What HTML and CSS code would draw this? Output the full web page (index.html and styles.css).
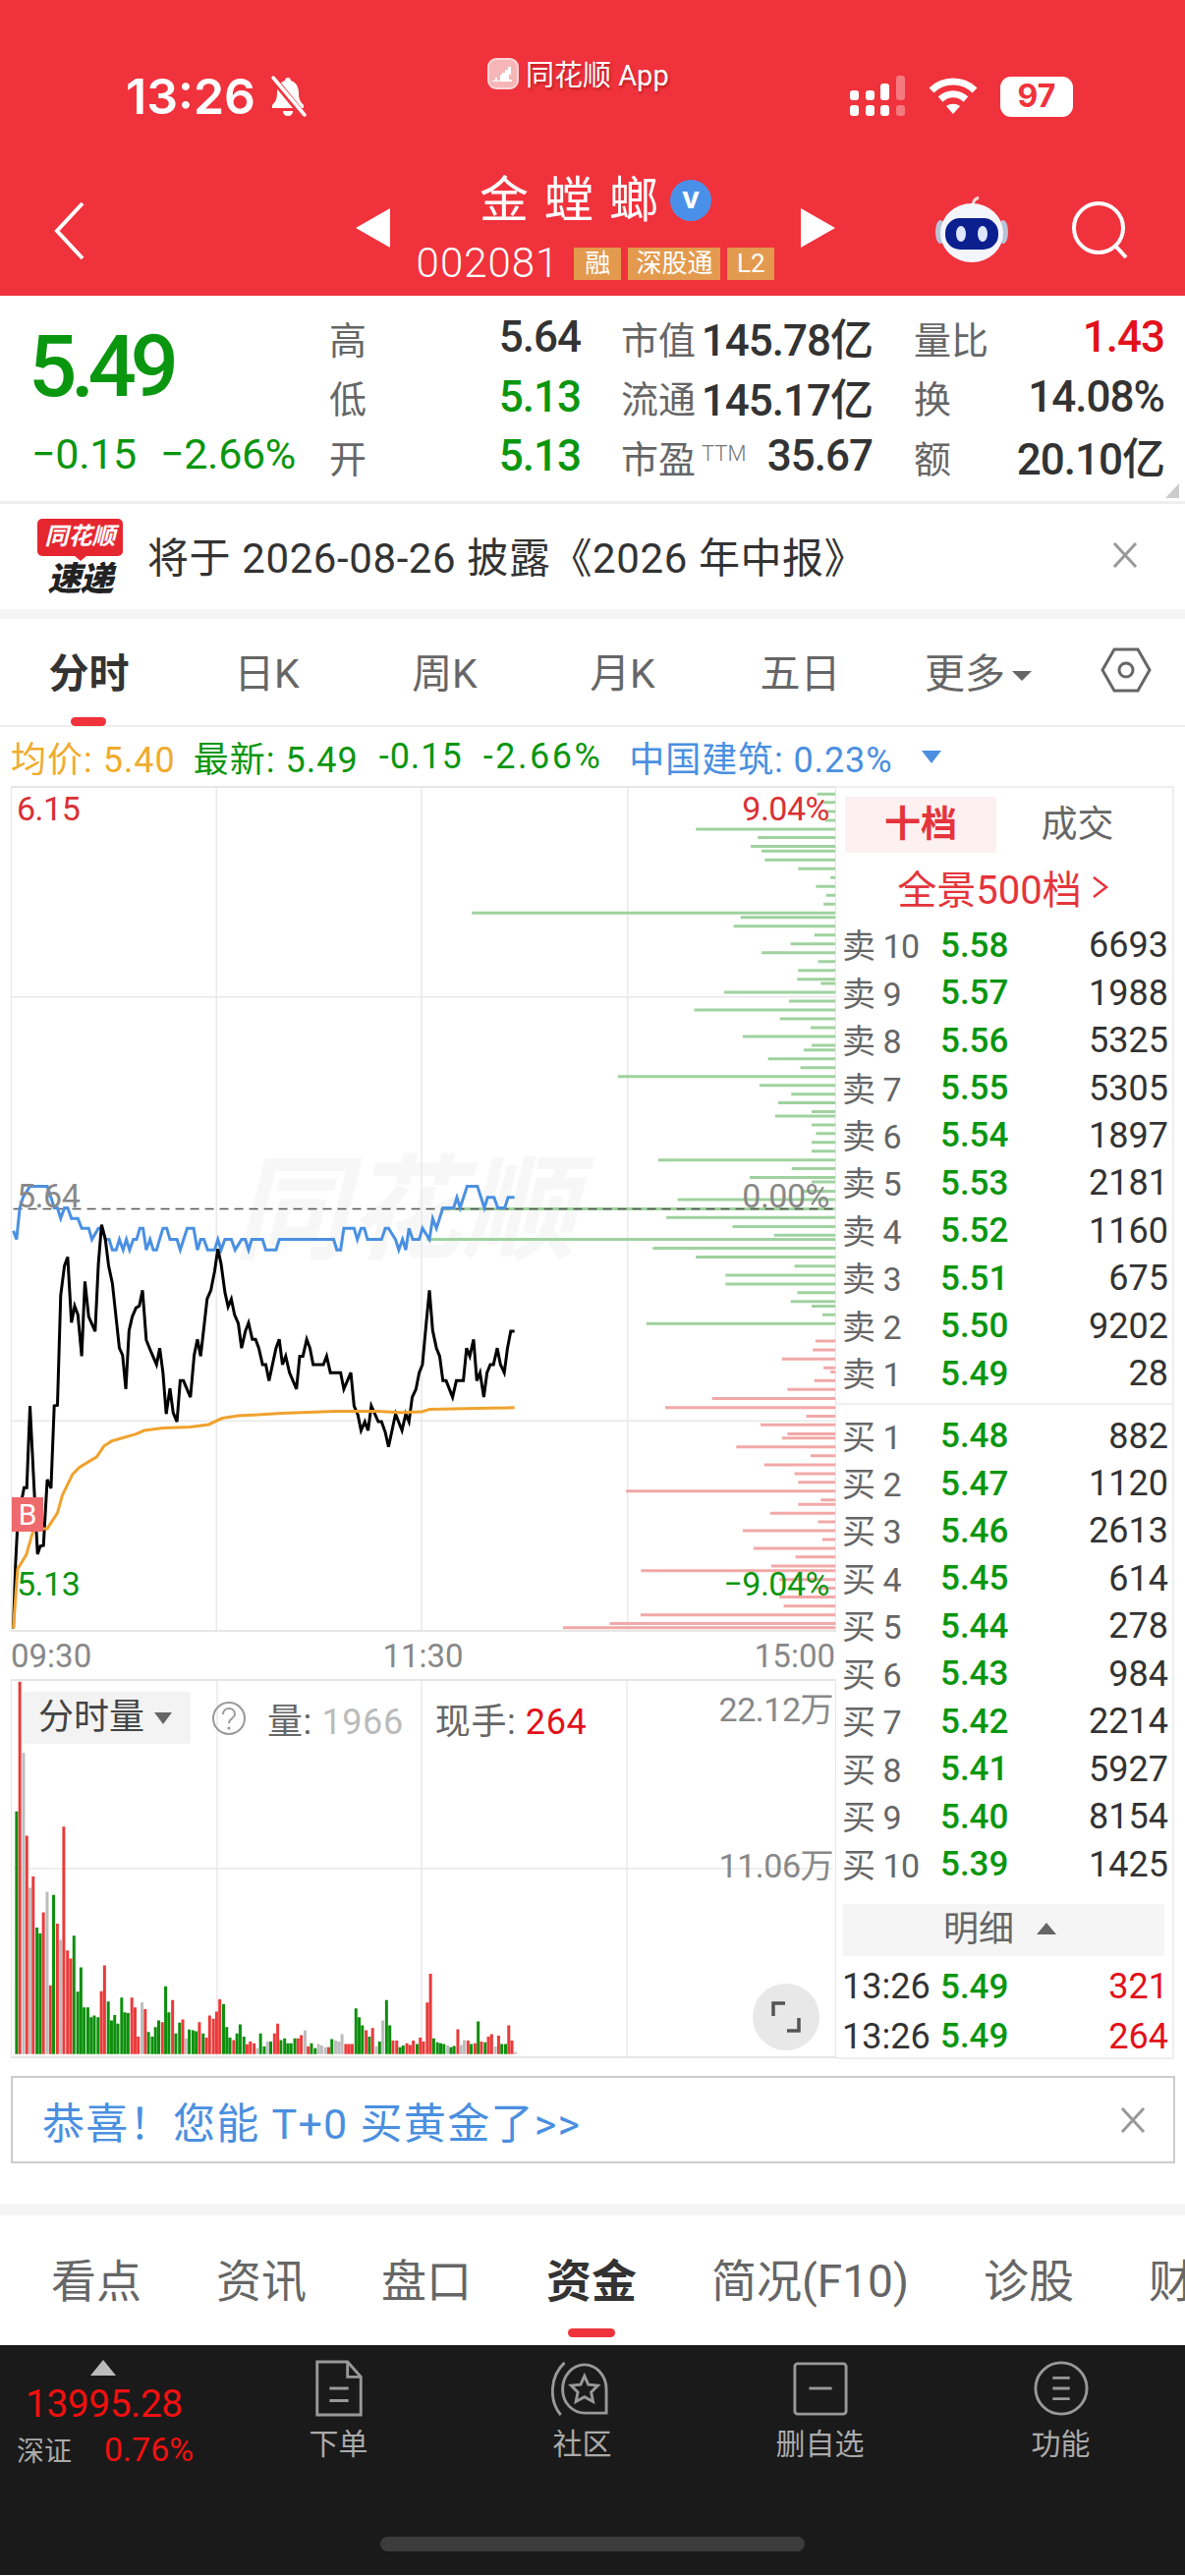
FILE: index.html
```
<!DOCTYPE html>
<html lang="zh">
<head>
<meta charset="utf-8">
<title>金螳螂 002081</title>
<link rel="stylesheet" href="styles.css">
</head>
<body>
<div class="page">
<header class="top">
  <div class="status">
    <div class="status-left">
      <span class="time">13:26</span>
      <svg class="bell" viewBox="0 0 40 44"><path d="M20 3c-2 0-3 1.500-3 3-6 2-8 7-8 13 0 6-2 9-5 12v3h32v-3c-3-3-5-6-5-12 0-6-2-11-8-13 0-1.500-1-3-3-3z" fill="#fff"/><path d="M15 37h10c0 3-2 5-5 5s-5-2-5-5z" fill="#fff"/><path d="M5 4l31 38" stroke="#f0323c" stroke-width="7"/><path d="M5 3l32 38" stroke="#fff" stroke-width="3.500" stroke-linecap="round"/></svg>
    </div>
    <div class="status-mid">
      <svg class="app-logo" viewBox="0 0 34 34"><rect x="2" y="2" width="30" height="30" rx="8" fill="#f6b6b8" stroke="#fbd6d6" stroke-width="2"/><path d="M6 24h3v-3h2v3h3v-6h2v-2h3v-3h3v-3h3v8h-2v5h3v2H6z" fill="#fff"/></svg>
      <span class="app-name">同花顺 App</span>
    </div>
    <div class="status-right">
      <svg class="signal" viewBox="0 0 58 42"><g fill="#fff"><rect x="0" y="15" width="9" height="10" rx="3"/><rect x="0" y="30" width="9" height="11" rx="3"/><rect x="16" y="15" width="9" height="10" rx="3"/><rect x="16" y="30" width="9" height="11" rx="3"/><rect x="31" y="8" width="9" height="17" rx="3"/><rect x="31" y="30" width="9" height="11" rx="3"/></g><g fill="#fff" opacity=".35"><rect x="47" y="0" width="9" height="25" rx="3"/><rect x="47" y="30" width="9" height="11" rx="3"/></g></svg>
      <svg class="wifi" viewBox="0 0 50 38"><path d="M3 13C15 1 35 1 47 13" fill="none" stroke="#fff" stroke-width="7"/><path d="M12 22c8-7 18-7 26 0" fill="none" stroke="#fff" stroke-width="7"/><path d="M18 29c4-3 10-3 14 0L25 37z" fill="#fff"/></svg>
      <div class="battery"><span class="battery-num">97</span></div>
    </div>
  </div>
  <div class="nav">
    <svg class="back" viewBox="0 0 32 60"><path d="M29 2L3 30l26 28" fill="none" stroke="#fff" stroke-width="4"/></svg>
    <div class="stock-pick">
      <span class="tri-left"></span>
      <div class="stock-id">
        <div class="stock-title"><span class="stock-name">金螳螂</span><span class="v-badge">v</span></div>
        <div class="stock-code"><span class="code">002081</span><span class="tag">融</span><span class="tag">深股通</span><span class="tag">L2</span></div>
      </div>
      <span class="tri-right"></span>
    </div>
    <svg class="robot" viewBox="0 0 76 70"><path d="M40 14c-2-5 0-9 5-11" fill="none" stroke="#f5d6d6" stroke-width="3"/><ellipse cx="6" cy="38" rx="5" ry="12" fill="#b9c3d8"/><ellipse cx="70" cy="38" rx="5" ry="12" fill="#b9c3d8"/><ellipse cx="38" cy="39" rx="32" ry="30" fill="#f4f6fb"/><rect x="11" y="24" width="54" height="32" rx="15" fill="#0b1f8f"/><ellipse cx="27" cy="40" rx="5" ry="8" fill="#dfe7ff"/><ellipse cx="49" cy="40" rx="5" ry="8" fill="#dfe7ff"/></svg>
    <svg class="search" viewBox="0 0 60 60"><circle cx="28" cy="28" r="25" fill="none" stroke="#fff" stroke-width="4"/><path d="M45 46l11 12" stroke="#fff" stroke-width="4"/></svg>
  </div>
</header>

<section class="quote">
  <div class="quote-main">
    <div class="price">5.49</div>
    <div class="change"><span>−0.15</span><span>−2.66%</span></div>
  </div>
  <div class="q-col q-col1">
    <div class="q-row"><span class="q-l">高</span><span class="q-v">5.64</span></div>
    <div class="q-row"><span class="q-l">低</span><span class="q-v up">5.13</span></div>
    <div class="q-row"><span class="q-l">开</span><span class="q-v up">5.13</span></div>
  </div>
  <div class="q-col q-col2">
    <div class="q-row"><span class="q-l">市值</span><span class="q-v">145.78亿</span></div>
    <div class="q-row"><span class="q-l">流通</span><span class="q-v">145.17亿</span></div>
    <div class="q-row"><span class="q-l">市盈<sup class="ttm">TTM</sup></span><span class="q-v">35.67</span></div>
  </div>
  <div class="q-col q-col3">
    <div class="q-row"><span class="q-l">量比</span><span class="q-v dn">1.43</span></div>
    <div class="q-row"><span class="q-l">换</span><span class="q-v">14.08%</span></div>
    <div class="q-row"><span class="q-l">额</span><span class="q-v">20.10亿</span></div>
  </div>
  <span class="corner"></span>
</section>

<section class="notice">
  <div class="notice-logo"><span class="nl-top">同花顺</span><span class="nl-bot">速递</span></div>
  <span class="notice-text">将于 2026-08-26 披露《2026 年中报》</span>
  <svg class="close" viewBox="0 0 26 28"><path d="M2 2l22 24M24 2L2 26" stroke="#999" stroke-width="3" fill="none"/></svg>
</section>
<div class="band"></div>

<nav class="ktabs">
  <span class="ktab active">分时</span>
  <span class="ktab">日K</span>
  <span class="ktab">周K</span>
  <span class="ktab">月K</span>
  <span class="ktab">五日</span>
  <span class="ktab">更多<i class="more-tri"></i></span>
  <svg class="hex" viewBox="0 0 52 46"><path d="M14 2h24l12 21-12 21H14L2 23z" fill="none" stroke="#666" stroke-width="3"/><circle cx="26" cy="23" r="7" fill="none" stroke="#666" stroke-width="3"/></svg>
</nav>

<div class="inforow">
  <span class="i-avg">均价: 5.40</span>
  <span class="i-new">最新: 5.49</span>
  <span class="i-new">-0.15</span>
  <span class="i-new">-2.66%</span>
  <span class="i-idx">中国建筑: 0.23%</span>
  <i class="i-tri"></i>
</div>

<div class="board">
  <div class="charts">
    <div class="main-chart">
      <span class="wm">同花顺</span>
      <svg class="plot" viewBox="0 0 838 858">
        <g class="grid"><path d="M208 0V858M417 0V858M627 0V858M0 213H838M0 645H838"/></g>
        <g transform="translate(-11 -162) scale(.5485 .33333)">
          <path class="depth-g" d="M1515 505H1550M1522 530H1550M1530 558H1550M1530 585H1550M1290 612H1550M1405 638H1550M1392 665H1550M1412 679H1550M1418 706H1550M1480 733H1550M1540 760H1550M1513 787H1550M1532 814H1550M1527 841H1550M874 868H1550M1373 882H1550M1360 909H1550M1510 936H1550M1466 963H1550M1412 990H1550M1517 1017H1550M1480 1044H1550M1478 1071H1550M1522 1084H1550M1342 1111H1550M1463 1138H1550M1287 1165H1550M1446 1192H1550M1503 1219H1550M1377 1246H1550M1505 1273H1550M1490 1287H1550M1424 1314H1550M1484 1341H1550M1145 1368H1550M1408 1395H1550M1467 1422H1550M1443 1449H1550M1505 1476H1550M1437 1489H1550"/>
        </g>
        <g transform="translate(-11 328) scale(.5485 .35714)">
          <path class="depth-g" d="M1505 43H1550M1513 68H1550M1505 93H1550M1505 118H1550M1220 143H1550M1468 168H1550M1390 193H1550M1505 206H1550M1490 232H1550M1256 256H1550M820 283H1550M1235 307H1550M1358 333H1550M1435 358H1550M790 370H1550M1210 395H1550M1290 420H1550M1473 446H1550M1345 472H1550M1345 497H1550M1478 522H1550M1466 547H1550M1505 560H1550M1525 585H1550M1198 610H1550"/>
          <path class="depth-r" d="M1512 660H1550M1507 685H1550M1450 711H1550M1527 736H1550M1540 748H1550M1510 773H1550M1460 798H1550M1320 824H1550M1233 850H1550M1495 874H1550M1410 899H1550M1460 925H1550M1450 937H1550M1365 962H1550M1503 987H1550M1417 1013H1550M1473 1038H1550M1480 1063H1550M1160 1088H1550M1522 1113H1550M1480 1126H1550M1428 1151H1550M1517 1176H1550M1377 1201H1550M1525 1226H1550M1397 1251H1550M1475 1276H1550M1430 1302H1550M1188 1315H1550M1445 1340H1550M1510 1365H1550M1445 1390H1550M1453 1416H1550M1187 1441H1550M1130 1466H1550M1043 1478H1550"/>
          <path class="dash" d="M22 283H1550"/>
          <polyline class="l-blue" points="22,345 28,370 34,280 40,250 53,218 85,218 92,250 98,280 104,280 110,310 117,280 123,280 130,310 142,310 149,338 162,338 168,370 180,338 187,338 193,370 200,370 206,400 213,400 219,370 226,400 232,370 238,400 245,370 251,370 257,338 263,338 269,400 276,370 282,400 288,400 300,338 307,338 313,370 326,370 332,400 345,338 357,338 364,400 370,370 376,370 383,400 396,400 402,370 408,400 415,370 427,370 434,400 446,370 453,370 459,400 465,370 485,370 491,400 510,400 516,370 617,370 623,400 630,400 636,338 655,338 661,370 668,338 674,338 680,370 706,370 713,338 719,338 732,370 738,400 745,370 751,400 757,338 764,370 776,370 782,338 795,370 801,310 808,338 820,280 840,280 846,250 852,280 865,218 884,218 897,280 903,250 915,250 922,280 935,280 941,250 953,250"/>
          <polyline class="l-black" points="22,1480 26,1300 30,1180 38,1110 42,1078 47,1078 53,845 60,1060 67,1268 72,1245 78,1243 85,1055 92,1080 98,845 104,843 110,530 117,445 123,420 130,607 136,560 142,585 149,703 155,490 162,590 174,632 180,440 186,328 193,370 199,445 206,495 219,680 225,700 231,797 237,630 243,590 250,565 256,560 262,515 269,657 275,680 288,727 294,680 300,750 306,868 313,795 319,865 326,890 332,773 338,773 351,820 358,700 364,655 370,703 382,540 389,515 396,460 402,397 408,440 415,520 421,562 427,540 433,585 440,610 446,680 453,632 459,608 466,655 472,655 478,680 485,727 491,727 497,773 510,680 516,655 522,727 528,703 535,750 548,797 554,703 560,703 567,655 573,680 579,727 598,727 604,703 611,750 630,750 636,797 649,750 655,845 662,870 668,915 675,890 681,915 687,845 700,890 706,890 713,920 719,962 732,868 744,915 751,868 757,890 763,820 770,797 776,750 782,727 789,610 795,515 801,630 808,680 814,703 820,773 826,773 838,820 845,773 858,773 864,680 870,703 877,655 883,773 889,750 896,820 902,750 908,727 914,727 921,680 927,727 934,750 940,680 946,632 953,632"/>
          <polyline class="l-orange" points="22,1480 30,1310 46,1270 60,1195 85,1195 104,1150 113,1100 132,1040 145,1020 177,990 190,960 205,945 250,925 265,915 300,908 350,905 385,898 410,880 440,873 520,866 620,860 700,860 740,864 780,862 795,855 953,850"/>
        </g>
      </svg>
      <span class="lbl lbl-l lbl-top dn-s">6.15</span>
      <span class="lbl lbl-r lbl-top dn-s">9.04%</span>
      <span class="lbl lbl-l lbl-mid gray">5.64</span>
      <span class="lbl lbl-r lbl-mid gray">0.00%</span>
      <span class="lbl lbl-l lbl-bot up">5.13</span>
      <span class="lbl lbl-r lbl-bot up">−9.04%</span>
      <span class="b-mark">B</span>
    </div>
    <div class="timeaxis"><span>09:30</span><span>11:30</span><span>15:00</span></div>
    <div class="vol-chart">
      <svg class="plot" viewBox="0 0 838 384">
        <g class="grid"><path d="M208 0V384M417 0V384M627 0V384M0 192H838"/></g>
        <g transform="translate(-11 -31) scale(.5485 .33333)">
          <path class="v-g" d="M25 1238V493M63 1238V850M69 1238V868M94 1238V750M132 1238V875M139 1238V1047M145 1238V972M151 1238V1095M158 1238V1095M164 1238V1125M170 1238V1120M177 1238V1125M196 1238V1077M202 1238V1135M208 1238V1118M214 1238V1145M221 1238V1065M227 1238V1110M233 1238V1112M271 1238V1170M278 1238V1185M284 1238V1155M290 1238V1135M303 1238V1030M309 1238V1110M322 1238V1175M329 1238V1142M347 1238V1163M354 1238V1165M360 1238V1168M373 1238V1175M411 1238V1085M417 1238V1155M423 1238V1188M436 1238V1175M442 1238V1147M449 1238V1185M480 1238V1175M487 1238V1215M499 1238V1200M518 1238V1195M525 1238V1190M531 1238V1205M537 1238V1205M544 1238V1190M575 1238V1205M582 1238V1220M613 1238V1192M658 1238V1098M664 1238V1125M670 1238V1150M683 1238V1185M702 1238V1200M715 1238V1072M721 1238V1150M740 1238V1217M746 1238V1212M772 1238V1207M803 1238V1190M810 1238V1202M816 1238V1205M822 1238V1207M835 1238V1217M841 1238V1213M873 1238V1207M886 1238V1138M899 1238V1202M930 1238V1207M937 1238V1207"/>
          <path class="v-r" d="M31 1238V95M44 1238V568M56 1238V693M75 1238V803M88 1238V1027M101 1238V838M113 1238V540M120 1238V920M126 1238V945M183 1238V1045M189 1238V966M240 1238V1065M246 1238V1095M252 1238V1185M265 1238V1100M297 1238V1140M316 1238V1072M335 1238V1132M366 1238V1140M379 1238V1188M385 1238V1120M392 1238V1130M398 1238V1108M404 1238V1070M430 1238V1195M455 1238V1208M461 1238V1200M468 1238V1205M506 1238V1175M512 1238V1145M550 1238V1190M556 1238V1180M569 1238V1215M607 1238V1217M639 1238V1207M645 1238V1207M651 1238V1207M677 1238V1165M689 1238V1158M727 1238V1197M734 1238V1197M753 1238V1205M759 1238V1210M765 1238V1197M778 1238V1188M784 1238V1200M791 1238V1080M797 1238V992M848 1238V1162M867 1238V1197M880 1238V1205M892 1238V1200M905 1238V1185M911 1238V1177M924 1238V1182M943 1238V1150M949 1238V1197"/>
          <path class="v-s" d="M38 1238V313M50 1238V728M82 1238V740M107 1238V888M259 1238V1080M341 1238V1190M474 1238V1220M493 1238V1200M563 1238V1165M588 1238V1207M594 1238V1212M601 1238V1217M620 1238V1197M626 1238V1200M632 1238V1177M696 1238V1215M708 1238V1135M829 1238V1212M854 1238V1210M860 1238V1195M918 1238V1215M955 1238V1232"/>
        </g>
      </svg>
      <div class="vol-head">
        <span class="vol-btn">分时量<i class="vol-tri"></i></span>
        <svg class="help" viewBox="0 0 36 36"><circle cx="18" cy="18" r="16" fill="none" stroke="#999" stroke-width="2"/><path d="M12 14c0-8 12-8 12 0 0 4-6 4-6 9" fill="none" stroke="#999" stroke-width="2"/><circle cx="18" cy="28" r="1.600" fill="#999"/></svg>
        <span class="vol-item">量: <b class="faint">1966</b></span>
        <span class="vol-item">现手: <b class="hot">264</b></span>
      </div>
      <span class="vol-lbl vol-lbl-top">22.12万</span>
      <span class="vol-lbl vol-lbl-mid">11.06万</span>
      <span class="expand"><svg viewBox="0 0 36 36"><path d="M17 4H5v13M19 32h12V19" fill="none" stroke="#555" stroke-width="3.500"/></svg></span>
    </div>
  </div>
  <aside class="depth">
    <div class="d-tabs"><span class="d-tab on">十档</span><span class="d-tab">成交</span></div>
    <div class="d-full">全景500档 <svg class="d-chev" viewBox="0 0 18 24"><path d="M2 2l13 10L2 22" fill="none" stroke="#e5343c" stroke-width="2.500"/></svg></div>
    <div class="d-list">
      <div class="d-row"><span class="d-l">卖 10</span><span class="d-p">5.58</span><span class="d-v">6693</span></div>
      <div class="d-row"><span class="d-l">卖 9</span><span class="d-p">5.57</span><span class="d-v">1988</span></div>
      <div class="d-row"><span class="d-l">卖 8</span><span class="d-p">5.56</span><span class="d-v">5325</span></div>
      <div class="d-row"><span class="d-l">卖 7</span><span class="d-p">5.55</span><span class="d-v">5305</span></div>
      <div class="d-row"><span class="d-l">卖 6</span><span class="d-p">5.54</span><span class="d-v">1897</span></div>
      <div class="d-row"><span class="d-l">卖 5</span><span class="d-p">5.53</span><span class="d-v">2181</span></div>
      <div class="d-row"><span class="d-l">卖 4</span><span class="d-p">5.52</span><span class="d-v">1160</span></div>
      <div class="d-row"><span class="d-l">卖 3</span><span class="d-p">5.51</span><span class="d-v">675</span></div>
      <div class="d-row"><span class="d-l">卖 2</span><span class="d-p">5.50</span><span class="d-v">9202</span></div>
      <div class="d-row"><span class="d-l">卖 1</span><span class="d-p">5.49</span><span class="d-v">28</span></div>
    </div>
    <div class="d-sep"></div>
    <div class="d-list">
      <div class="d-row"><span class="d-l">买 1</span><span class="d-p">5.48</span><span class="d-v">882</span></div>
      <div class="d-row"><span class="d-l">买 2</span><span class="d-p">5.47</span><span class="d-v">1120</span></div>
      <div class="d-row"><span class="d-l">买 3</span><span class="d-p">5.46</span><span class="d-v">2613</span></div>
      <div class="d-row"><span class="d-l">买 4</span><span class="d-p">5.45</span><span class="d-v">614</span></div>
      <div class="d-row"><span class="d-l">买 5</span><span class="d-p">5.44</span><span class="d-v">278</span></div>
      <div class="d-row"><span class="d-l">买 6</span><span class="d-p">5.43</span><span class="d-v">984</span></div>
      <div class="d-row"><span class="d-l">买 7</span><span class="d-p">5.42</span><span class="d-v">2214</span></div>
      <div class="d-row"><span class="d-l">买 8</span><span class="d-p">5.41</span><span class="d-v">5927</span></div>
      <div class="d-row"><span class="d-l">买 9</span><span class="d-p">5.40</span><span class="d-v">8154</span></div>
      <div class="d-row"><span class="d-l">买 10</span><span class="d-p">5.39</span><span class="d-v">1425</span></div>
    </div>
    <div class="d-detail">明细<i class="d-tri"></i></div>
    <div class="d-row t-row"><span class="t-time">13:26</span><span class="d-p">5.49</span><span class="d-v hot">321</span></div>
    <div class="d-row t-row"><span class="t-time">13:26</span><span class="d-p">5.49</span><span class="d-v hot">264</span></div>
  </aside>
</div>

<div class="gold">
  <span class="gold-text">恭喜！您能 T+0 买黄金了&gt;&gt;</span>
  <svg class="close" viewBox="0 0 26 28"><path d="M2 2l22 24M24 2L2 26" stroke="#999" stroke-width="3" fill="none"/></svg>
</div>
<div class="band band-low"></div>

<nav class="ftabs">
  <span class="ftab">看点</span>
  <span class="ftab">资讯</span>
  <span class="ftab">盘口</span>
  <span class="ftab active">资金</span>
  <span class="ftab">简况(F10)</span>
  <span class="ftab">诊股</span>
  <span class="ftab">财务</span>
</nav>

<footer class="dock">
  <div class="dock-grid">
    <div class="index">
      <i class="idx-tri"></i>
      <div class="idx-val">13995.28</div>
      <div class="idx-sub"><span class="idx-name">深证</span><span class="idx-pct">0.76%</span></div>
    </div>
    <div class="dock-item">
      <svg class="dock-ico" viewBox="0 0 60 60"><path d="M7 2h32l14 16v40H7z" fill="none" stroke="#999" stroke-width="3"/><path d="M39 2v16h14" fill="none" stroke="#999" stroke-width="3"/><path d="M20 30h20M20 43h20" stroke="#999" stroke-width="3"/></svg>
      <span>下单</span>
    </div>
    <div class="dock-item">
      <svg class="dock-ico" viewBox="0 0 60 60"><path d="M10 58C-3 42-1 17 14 3" fill="none" stroke="#999" stroke-width="3"/><path d="M58 56H36C22 56 12 45 12 31 12 16 23 5 35 5s23 11 23 26z" fill="none" stroke="#999" stroke-width="3"/><path d="M35 17l4 9 10 1-7 7 2 10-9-5-9 5 2-10-7-7 10-1z" fill="none" stroke="#999" stroke-width="3"/></svg>
      <span>社区</span>
    </div>
    <div class="dock-item">
      <svg class="dock-ico" viewBox="0 0 60 60"><rect x="3" y="4" width="54" height="53" rx="3" fill="none" stroke="#999" stroke-width="3"/><path d="M18 30h24" stroke="#999" stroke-width="3"/></svg>
      <span>删自选</span>
    </div>
    <div class="dock-item">
      <svg class="dock-ico" viewBox="0 0 60 60"><circle cx="30" cy="30" r="27" fill="none" stroke="#999" stroke-width="3"/><path d="M21 19h18M21 30h18M21 41h18" stroke="#999" stroke-width="3"/></svg>
      <span>功能</span>
    </div>
  </div>
  <div class="home-bar"></div>
</footer>
</div>
</body>
</html>
```
FILE: styles.css
```
* { box-sizing: border-box; }
html, body { margin: 0; padding: 0; background: #fff; }
body { font-family: Roboto, "Noto Sans CJK SC", sans-serif; color: #333; }
.page { width: 1206px; height: 2622px; overflow: hidden; background: #fff; }
i { display: inline-block; font-style: normal; }

/* red header */
.top { height: 301px; background: #f0323c; color: #fff; }
.status { height: 170px; display: grid; grid-template-columns: 495px 370px 1fr; padding-top: 56px; }
.status-left { display: flex; align-items: center; height: 84px; padding-left: 128px; gap: 13px; }
.time { font: 600 50px/1 Inter, sans-serif; }
.bell { width: 40px; height: 44px; }
.status-mid { display: flex; align-items: flex-start; gap: 6px; padding-top: 2px; }
.app-logo { width: 34px; height: 34px; }
.app-name { font-size: 29px; line-height: 38px; text-shadow: 1px 2px 3px rgba(120,0,0,.5); white-space: nowrap; }
.status-right { display: flex; align-items: center; height: 84px; gap: 22px; padding-top: 0; }
.signal { width: 58px; height: 42px; margin-top: -1px; }
.wifi { width: 50px; height: 38px; }
.battery { width: 74px; height: 41px; background: #fff; border-radius: 11px; display: flex; align-items: center; justify-content: center; margin-left: 1px; }
.battery-num { font: 700 32px/1 Inter, sans-serif; color: #f0323c; }

.nav { display: flex; align-items: flex-start; padding-left: 55px; }
.back { width: 32px; height: 60px; margin-top: 35px; }
.stock-pick { display: flex; align-items: center; width: 488px; margin: 4px 0 0 275px; height: 116px; }
.tri-left { width: 0; height: 0; border: solid transparent; border-width: 20px 35px 20px 0; border-right-color: #fff; }
.tri-right { width: 0; height: 0; border: solid transparent; border-width: 20px 0 20px 35px; border-left-color: #fff; }
.stock-id { width: 419px; display: flex; flex-direction: column; align-items: center; gap: 18px; align-self: flex-start; margin-top: 2px; }
.stock-title { display: flex; align-items: center; gap: 10px; height: 56px; }
.stock-name { font-size: 50px; line-height: 56px; letter-spacing: 16px; margin-right: -14px; }
.v-badge { width: 42px; height: 42px; border-radius: 50%; background: #4a90e8; color: #fff; font: 700 30px/36px Inter, sans-serif; text-align: center; }
.stock-code { display: flex; align-items: center; gap: 7px; height: 36px; }
.code { font-size: 42px; font-weight: 300; letter-spacing: 1px; margin-right: 8px; line-height: 36px; white-space: nowrap; }
.tag { height: 33px; min-width: 48px; padding: 0 8px; background: #e39a4e; color: #fff; font-size: 26px; line-height: 33px; text-align: center; white-space: nowrap; }
.robot { width: 76px; height: 70px; margin: 28px 0 0 101px; }
.search { width: 60px; height: 60px; margin: 34px 0 0 63px; }

/* quote */
.quote { height: 212px; border-bottom: 3px solid #eee; display: grid; grid-template-columns: 335px 256px 297px 297px; padding-top: 12px; position: relative; }
.quote-main { padding-left: 29px; color: #0a960f; }
.price { font-size: 87px; font-weight: 500; line-height: 84px; letter-spacing: -6.500px; margin-top: 18px; }
.change { display: flex; gap: 24px; font-size: 43px; line-height: 50px; margin-top: 22px; padding-left: 3px; letter-spacing: -.300px; white-space: nowrap; }
.q-col { display: flex; flex-direction: column; }
.q-col2 { padding-left: 41px; }
.q-col3 { padding-left: 42px; }
.q-row { height: 60.500px; display: flex; justify-content: space-between; align-items: center; }
.q-l { font-size: 38px; color: #666; white-space: nowrap; }
.q-v { font-size: 44px; font-weight: 500; color: #333; white-space: nowrap; letter-spacing: -1px; }
.q-v.up, .up { color: #0a960f; }
.q-v.dn { color: #e2111b; }
.ttm { font-size: 22px; font-weight: 300; color: #777; vertical-align: 12px; line-height: 0; margin-left: 6px; }
.corner { position: absolute; right: 6px; bottom: 3px; width: 0; height: 0; border-left: 14px solid transparent; border-bottom: 15px solid #ccc; }

/* notice */
.notice { height: 107px; display: flex; align-items: center; padding: 0 48px 4px 38px; }
.notice-logo { width: 87px; display: flex; flex-direction: column; align-items: center; gap: 6px; margin-top: 4px; }
.nl-top { width: 87px; height: 38px; background: #e5262f; border-radius: 5px; color: #fff; font-size: 24px; font-weight: 700; font-style: italic; line-height: 37px; text-align: center; position: relative; }
.nl-top::after { content: ""; position: absolute; left: 37px; top: 37px; border: solid transparent; border-width: 6px 7px 0; border-top-color: #e5262f; }
.nl-bot { font-size: 34px; font-weight: 900; font-style: italic; line-height: 34px; color: #222; letter-spacing: -1px; }
.notice-text { font-size: 42px; color: #333; margin-left: 25px; flex: 1; white-space: nowrap; letter-spacing: .6px; }
.close { width: 26px; height: 28px; }
.band { height: 10px; background: #f5f5f5; }

/* k tabs */
.ktabs { height: 110px; display: grid; grid-template-columns: repeat(6, 181px) 1fr; border-bottom: 2px solid #eee; align-items: center; justify-items: center; padding-bottom: 4px; }
.ktab { font-size: 41px; color: #666; position: relative; white-space: nowrap; }
.ktab.active { color: #333; font-weight: 700; }
.ktab.active::after { content: ""; position: absolute; left: 22px; top: 78px; width: 36px; height: 9px; background: #f0323c; border-radius: 5px; }
.more-tri { border: solid transparent; border-width: 10px 10px 0; border-top-color: #666; margin-left: 7px; vertical-align: 7px; }
.hex { width: 52px; height: 46px; }

/* info row */
.inforow { height: 60px; display: flex; align-items: center; padding-left: 11px; font-size: 36px; letter-spacing: 1px; white-space: nowrap; }
.i-avg { color: #f0ac2c; margin-right: 18px; }
.i-new { color: #0a960f; margin-right: 21px; }
.i-new + .i-new + .i-new { letter-spacing: 2.500px; }
.i-idx { color: #4a8fe0; margin-left: 6px; letter-spacing: .9px; }
.i-tri { border: solid transparent; border-width: 13px 10px 0; border-top-color: #4a8fe0; margin-left: 30px; }

/* board */
.board { display: flex; height: 1296px; }
.charts { width: 851px; padding-left: 11px; }
.main-chart { position: relative; height: 861px; border: 1px solid #e6e6e6; border-width: 2px 1px 2px 1px; }
.vol-chart { position: relative; height: 386px; border: 1px solid #e6e6e6; border-width: 2px 1px 2px 1px; }
.plot { position: absolute; left: 0; top: 0; width: 100%; height: 100%; overflow: hidden; }
.grid path { stroke: #e9e9e9; stroke-width: 1.500; fill: none; }
.plot path, .plot polyline { vector-effect: non-scaling-stroke; fill: none; }
.depth-g { stroke: #9fd29f; stroke-width: 3; }
.depth-r { stroke: #f2a8a8; stroke-width: 3; }
.dash { stroke: #555; stroke-width: 1.500; stroke-dasharray: 9 6; }
.l-blue { stroke: #4a90e2; stroke-width: 3; }
.l-black { stroke: #000; stroke-width: 3; }
.l-orange { stroke: #f0a22e; stroke-width: 3; }
.v-g { stroke: #0d8f0d; stroke-width: 3; }
.v-r { stroke: #ea3a3a; stroke-width: 3; }
.v-s { stroke: #bdbdbd; stroke-width: 3; }
.wm { position: absolute; left: 226px; top: 372px; font-size: 116px; font-weight: 700; font-style: italic; line-height: 116px; color: #f7f7f7; white-space: nowrap; }
.lbl { position: absolute; font-size: 34px; line-height: 36px; white-space: nowrap; letter-spacing: -.500px; }
.lbl-l { left: 5px; }
.lbl-r { right: 6px; }
.lbl-top { top: 3px; }
.lbl-mid { top: 397px; }
.lbl-bot { top: 792px; }
.dn-s { color: #d93035; }
.gray { color: #888; }
.b-mark { position: absolute; left: 0; top: 722px; width: 32px; height: 35px; background: #ee6a6e; color: #fff; font-size: 30px; line-height: 35px; text-align: center; }
.timeaxis { height: 48px; display: flex; justify-content: space-between; align-items: center; padding: 0 1px 0 0; font-size: 33px; color: #888; }

.vol-head { position: absolute; left: 11px; top: 11px; display: flex; align-items: center; height: 53px; }
.vol-btn { width: 171px; height: 53px; background: #f3f3f3; border-radius: 4px; font-size: 36px; line-height: 53px; padding-left: 16px; color: #444; white-space: nowrap; }
.vol-tri { border: solid transparent; border-width: 12px 9px 0; border-top-color: #666; margin-left: 10px; vertical-align: 5px; }
.help { width: 36px; height: 36px; margin-left: 21px; }
.vol-item { font-size: 36px; color: #666; margin-left: 21px; white-space: nowrap; letter-spacing: .6px; }
.vol-item b { font-weight: 400; }
.vol-item + .vol-item { margin-left: 32px; }
.faint { color: #bbb; }
.hot { color: #e2111b; }
.vol-lbl { position: absolute; right: 2px; font-size: 34px; line-height: 36px; color: #888; white-space: nowrap; letter-spacing: -.500px; }
.vol-lbl-top { top: 11px; }
.vol-lbl-mid { top: 170px; }
.expand { position: absolute; left: 754px; top: 308px; width: 68px; height: 68px; border-radius: 50%; background: #e8e8e8; padding: 16px; display: block; }
.expand svg { width: 36px; height: 36px; display: block; }

/* depth */
.depth { width: 344px; border: 2px solid #eee; border-left-width: 0; padding-top: 9px; }
.d-tabs { display: grid; grid-template-columns: 154px 1fr; margin-left: 9px; height: 56px; }
.d-tab { font-size: 37px; line-height: 57px; text-align: center; color: #666; padding-right: 14px; }
.d-tab.on { background: #fdf0f0; color: #e5343c; font-weight: 700; padding-right: 0; }
.d-full { height: 71px; display: flex; align-items: center; justify-content: center; gap: 10px; font-size: 40px; color: #e5343c; white-space: nowrap; padding-right: 2px; }
.d-chev { width: 18px; height: 24px; }
.d-sep { height: 2px; background: #eee; margin: 6px 0 7px; }
.d-list { display: flex; flex-direction: column; }
.d-row { height: 48.450px; display: grid; grid-template-columns: 100px 1fr auto; align-items: center; padding: 0 4px 0 6px; }
.d-l { font-size: 34px; color: #666; white-space: nowrap; margin-top: -3px; letter-spacing: -.500px; }
.d-p { font-size: 35px; font-weight: 500; color: #0a960f; }
.d-v { font-size: 36px; color: #333; }
.d-v.hot { color: #e2111b; }
.d-detail { height: 53px; margin: 16px 8px 6px 7px; background: #f5f5f5; text-align: center; font-size: 36px; line-height: 53px; color: #666; padding-right: 8px; }
.d-tri { border: solid transparent; border-width: 0 10px 12px; border-bottom-color: #666; margin-left: 23px; vertical-align: 7px; }
.t-row { height: 50.500px; }
.t-time { font-size: 36px; color: #333; }

/* gold */
.gold { margin: 17px 10px 0 11px; height: 89px; border: 2px solid #ccc; display: flex; align-items: center; justify-content: space-between; padding: 0 28px 0 30px; }
.gold-text { font-size: 43px; color: #4a8fe0; white-space: nowrap; letter-spacing: 1.300px; }
.band-low { height: 12px; margin-top: 41px; background: #f5f5f5; }

/* f tabs */
.ftabs { height: 132px; display: flex; align-items: center; gap: 76px; padding: 0 0 6px 52px; white-space: nowrap; overflow: hidden; }
.ftab { font-size: 46px; color: #666; position: relative; flex: none; }
.ftab.active { color: #333; font-weight: 700; }
.ftab.active::after { content: ""; position: absolute; left: 22px; top: 85px; width: 48px; height: 9px; border-radius: 5px; background: #f0323c; }

/* dock */
.dock { height: 234px; background: #1a1a1a; position: relative; }
.dock-grid { display: grid; grid-template-columns: 222px repeat(4, 245px); }
.index { padding-left: 17px; position: relative; height: 120px; }
.idx-tri { position: absolute; left: 92px; top: 15px; border: solid transparent; border-width: 0 13px 16px; border-bottom-color: #bbb; }
.idx-val { position: absolute; left: 26px; top: 38px; font-size: 39px; line-height: 44px; color: #f01010; letter-spacing: -.500px; white-space: nowrap; }
.idx-sub { position: absolute; left: 17px; top: 86px; display: flex; align-items: center; gap: 33px; white-space: nowrap; }
.idx-name { font-size: 28px; color: #aaa; }
.idx-pct { font-size: 34px; color: #f01010; }
.dock-item { display: flex; flex-direction: column; align-items: center; padding-top: 15px; gap: 3px; font-size: 30px; color: #aaa; }
.dock-item:nth-child(3) span { margin-left: 6px; }
.dock-ico { width: 58px; height: 58px; }
.home-bar { position: absolute; left: 387px; bottom: 24px; width: 432px; height: 15px; border-radius: 8px; background: #3c3c3c; }
```
